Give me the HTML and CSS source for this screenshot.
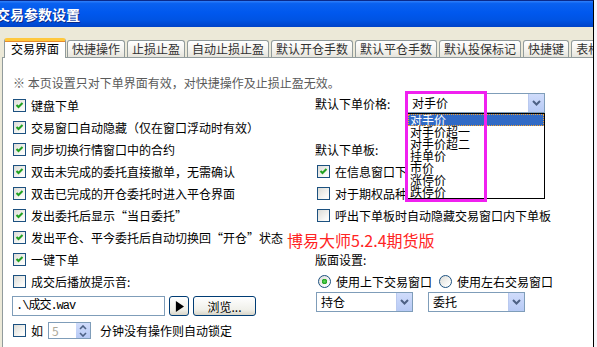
FILE: index.html
```html
<!DOCTYPE html>
<html lang="zh">
<head>
  <meta charset="UTF-8">
  <title>交易参数设置</title>
  <link rel="stylesheet" href="styles.css">
</head>
<body>
  <div class="window">
    <div class="titlebar">交易参数设置</div>

    <div class="tabbar">
      <div class="tab active">交易界面</div>
      <div class="tab">快捷操作</div>
      <div class="tab">止损止盈</div>
      <div class="tab">自动止损止盈</div>
      <div class="tab">默认开仓手数</div>
      <div class="tab">默认平仓手数</div>
      <div class="tab">默认投保标记</div>
      <div class="tab">快捷键</div>
      <div class="tab">表格</div>
    </div>

    <div class="panel">
      <div class="note">※ 本页设置只对下单界面有效，对快捷操作及止损止盈无效。</div>

      <div class="columns">
        <!-- 左侧选项 -->
        <div class="col-left">
          <div class="row"><span class="cb on"><svg viewBox="0 0 11 11"><path d="M2.5 5 L4.5 7 L8.5 3"/></svg></span>键盘下单</div>
          <div class="row"><span class="cb on"><svg viewBox="0 0 11 11"><path d="M2.5 5 L4.5 7 L8.5 3"/></svg></span>交易窗口自动隐藏（仅在窗口浮动时有效）</div>
          <div class="row"><span class="cb on"><svg viewBox="0 0 11 11"><path d="M2.5 5 L4.5 7 L8.5 3"/></svg></span>同步切换行情窗口中的合约</div>
          <div class="row"><span class="cb on"><svg viewBox="0 0 11 11"><path d="M2.5 5 L4.5 7 L8.5 3"/></svg></span>双击未完成的委托直接撤单，无需确认</div>
          <div class="row"><span class="cb on"><svg viewBox="0 0 11 11"><path d="M2.5 5 L4.5 7 L8.5 3"/></svg></span>双击已完成的开仓委托时进入平仓界面</div>
          <div class="row"><span class="cb on"><svg viewBox="0 0 11 11"><path d="M2.5 5 L4.5 7 L8.5 3"/></svg></span>发出委托后显示“当日委托”</div>
          <div class="row"><span class="cb on"><svg viewBox="0 0 11 11"><path d="M2.5 5 L4.5 7 L8.5 3"/></svg></span>发出平仓、平今委托后自动切换回“开仓”状态</div>
          <div class="row"><span class="cb on"><svg viewBox="0 0 11 11"><path d="M2.5 5 L4.5 7 L8.5 3"/></svg></span>一键下单</div>
          <div class="row"><span class="cb"></span>成交后播放提示音:</div>

          <div class="file-row">
            <div class="file-input">.\成交.wav</div>
            <div class="btn play"><svg viewBox="0 0 10 12"><path d="M1 0 L10 6 L1 12 Z"/></svg></div>
            <div class="btn browse">浏览...</div>
          </div>

          <div class="lock-row">
            <span class="cb"></span>如
            <div class="spin">
              <span class="num">5</span>
              <span class="spin-btns">
                <svg viewBox="0 0 8 5"><path d="M1 4 L4 1 L7 4"/></svg>
                <svg viewBox="0 0 8 5"><path d="M1 1 L4 4 L7 1"/></svg>
              </span>
            </div>
            <span class="lock-text">分钟没有操作则自动锁定</span>
          </div>
        </div>

        <!-- 右侧选项 -->
        <div class="col-right">
          <div class="row price-row">
            <span class="label">默认下单价格:</span>
            <div class="select price">
              <span class="val">对手价</span>
              <span class="arrow"><svg viewBox="0 0 9 6"><path d="M1 1 L4.5 4.5 L8 1"/></svg></span>
              <div class="droplist">
                <div class="opt sel">对手价</div>
                <div class="opt">对手价超一</div>
                <div class="opt">对手价超二</div>
                <div class="opt">挂单价</div>
                <div class="opt">市价</div>
                <div class="opt">涨停价</div>
                <div class="opt">跌停价</div>
              </div>
              <div class="mark"></div>
            </div>
          </div>
          <div class="row">默认下单板:</div>
          <div class="row sub"><span class="cb on"><svg viewBox="0 0 11 11"><path d="M2.5 5 L4.5 7 L8.5 3"/></svg></span><span class="under">在信息窗口下单后自动隐藏</span></div>
          <div class="row sub"><span class="cb"></span><span class="under">对于期权品种使用期权下单板</span></div>
          <div class="row sub"><span class="cb"></span>呼出下单板时自动隐藏交易窗口内下单板</div>
          <div class="row"><span class="brand">博易大师5.2.4期货版</span></div>
          <div class="row">版面设置:</div>
          <div class="row sub">
            <span class="radio on"></span>使用上下交易窗口
            <span class="radio second"></span>使用左右交易窗口
          </div>
          <div class="select-row">
            <div class="select small">
              <span class="val">持仓</span>
              <span class="arrow"><svg viewBox="0 0 9 6"><path d="M1 1 L4.5 4.5 L8 1"/></svg></span>
            </div>
            <div class="select small">
              <span class="val">委托</span>
              <span class="arrow"><svg viewBox="0 0 9 6"><path d="M1 1 L4.5 4.5 L8 1"/></svg></span>
            </div>
          </div>
        </div>
      </div>
    </div>
  </div>
</body>
</html>
```

FILE: styles.css
```css
/* 全局设置 */
* {
  box-sizing: border-box;
  margin: 0;
  padding: 0;
}
body {
  font-family: "Noto Sans CJK SC", sans-serif;
  font-size: 12px;
  color: #000;
  background: #f6f6fb;
  width: 597px;
  height: 347px;
  overflow: hidden;
}
.window {
  width: 594px;
  height: 347px;
  border-top: 1px solid #0a2a8a;
  border-right: 1px solid #000;
  background: #ece9d8;
  overflow: hidden;
}

/* 标题栏 */
.titlebar {
  height: 26px;
  background: linear-gradient(#2f80fb 0, #0a61ef 10%, #0058ee 45%, #0053e2 75%, #0043c8 100%);
  color: #fff;
  font-size: 14px;
  font-weight: bold;
  line-height: 26px;
  text-indent: -4px;
  text-shadow: 1px 1px 0 #0a2a8a;
  white-space: nowrap;
}

/* 标签页 */
.tabbar {
  display: flex;
  align-items: flex-end;
  gap: 2px;
  height: 30px;
  padding-left: 4px;
  white-space: nowrap;
}
.tab {
  height: 17px;
  padding: 0 4px;
  border: 1px solid #919b9c;
  border-bottom: none;
  border-radius: 3px 3px 0 0;
  background: linear-gradient(#ffffff, #f3f2ed 60%, #e6e4dc);
  color: #333;
  line-height: 15px;
}
.tab.active {
  position: relative;
  z-index: 1;
  height: 20px;
  margin-bottom: -1px;
  margin-right: -1px;
  padding: 0 6px;
  border-top: 3px solid #ffc83c;
  box-shadow: inset 0 1px 0 #e68b2c;
  background: #fff;
  color: #000;
  line-height: 16px;
}

/* 内容面板 */
.panel {
  margin-left: 2px;
  height: 290px;
  border-top: 1px solid #919b9c;
  border-left: 1px solid #919b9c;
  background: #fff;
  padding: 18px 0 0 10px;
}
.note {
  line-height: 14px;
  color: #5a5a5a;
  margin-bottom: 4px;
  white-space: nowrap;
}
.columns {
  display: flex;
  align-items: flex-start;
}
.col-left {
  width: 302px;
}
.col-right {
  flex: 1;
  margin-top: -1px;
}
.row {
  display: flex;
  align-items: center;
  height: 22px;
  white-space: nowrap;
}

/* 复选框 */
.cb {
  display: inline-flex;
  flex: none;
  width: 13px;
  height: 13px;
  margin-right: 5px;
  border: 1px solid #1c5180;
  background: linear-gradient(135deg, #dcdcd7, #fbfbf9 80%);
}
.cb svg {
  width: 11px;
  height: 11px;
}
.cb path {
  fill: none;
  stroke: #21a121;
  stroke-width: 2;
}
.sub {
  padding-left: 2px;
}
/* 被下拉列表遮住的部分 */
.under {
  width: 70px;
  overflow: hidden;
}

/* 单选框 */
.radio {
  flex: none;
  width: 13px;
  height: 13px;
  margin: 0 5px 0 1px;
  border: 1px solid #1c5180;
  border-radius: 50%;
  background: linear-gradient(135deg, #dcdcd7, #fdfdfc 80%);
}
.radio.on {
  background: radial-gradient(circle, #5fdc5a 0, #21a121 2.5px, transparent 3px), linear-gradient(135deg, #dcdcd7, #fdfdfc 80%);
}
.radio.second {
  margin-left: 7px;
}

/* 下拉框 */
.price-row {
  height: 20px;
  margin-bottom: 25px;
}
.label {
  width: 92px;
}
.select {
  position: relative;
  display: flex;
  height: 20px;
  border: 1px solid #7f9db9;
  background: #fff;
}
.select.price {
  width: 138px;
}
.select .val {
  flex: 1;
  padding-left: 4px;
  line-height: 18px;
}
.select .arrow {
  display: flex;
  align-items: center;
  justify-content: center;
  width: 16px;
  border-left: 1px solid #b9c9ef;
  background: linear-gradient(#d0dcfb, #b7caf5);
}
.arrow svg {
  width: 9px;
  height: 6px;
}
.arrow path {
  fill: none;
  stroke: #4d6185;
  stroke-width: 2;
}
.droplist {
  position: absolute;
  z-index: 2;
  top: 19px;
  left: -1px;
  width: 138px;
  border: 1px solid #000;
  background: #fff;
}
.opt {
  height: 12px;
  line-height: 12px;
  padding-left: 2px;
}
.opt.sel {
  background: #316ac5;
  color: #fff;
  outline: 1px dotted #f0a030;
  outline-offset: -1px;
}
.mark {
  position: absolute;
  z-index: 3;
  top: -3px;
  left: -3px;
  width: 82px;
  height: 111px;
  border: 3px solid #f020f0;
}
.select-row {
  display: flex;
  gap: 15px;
  padding-left: 1px;
}
.select.small {
  width: 97px;
}

.brand {
  margin-left: -28px;
  margin-top: 5px;
  color: #ff2424;
  font-size: 16px;
  line-height: 18px;
}

/* 文件与按钮 */
.file-row {
  display: flex;
  gap: 4px;
  margin: 4px 0 0 -1px;
}
.file-input {
  width: 153px;
  height: 20px;
  border: 1px solid #7f9db9;
  padding-left: 3px;
  font-family: "Liberation Mono", "Noto Sans CJK SC", monospace;
  letter-spacing: -1px;
  line-height: 18px;
}
.btn {
  display: flex;
  align-items: center;
  justify-content: center;
  height: 20px;
  border: 1px solid #003c74;
  border-radius: 3px;
  background: linear-gradient(#ffffff, #f0f0ea 70%, #d8d5c8);
}
.btn.play {
  width: 20px;
}
.btn.play svg {
  width: 9px;
  height: 11px;
}
.btn.browse {
  width: 63px;
}

/* 自动锁定 */
.lock-row {
  display: flex;
  align-items: center;
  height: 17px;
  margin-top: 6px;
  white-space: nowrap;
}
.spin {
  display: flex;
  width: 43px;
  height: 17px;
  margin-left: 5px;
  border: 1px solid #7f9db9;
}
.spin .num {
  flex: 1;
  padding-left: 3px;
  color: #aca899;
  line-height: 15px;
}
.spin-btns {
  display: flex;
  flex-direction: column;
  align-items: center;
  justify-content: center;
  gap: 2px;
  width: 14px;
  background: linear-gradient(#d0dcfb, #b7caf5);
}
.spin-btns svg {
  width: 8px;
  height: 5px;
}
.spin-btns path {
  fill: none;
  stroke: #4d6185;
  stroke-width: 1.6;
}
.lock-text {
  margin-left: 9px;
}
```
